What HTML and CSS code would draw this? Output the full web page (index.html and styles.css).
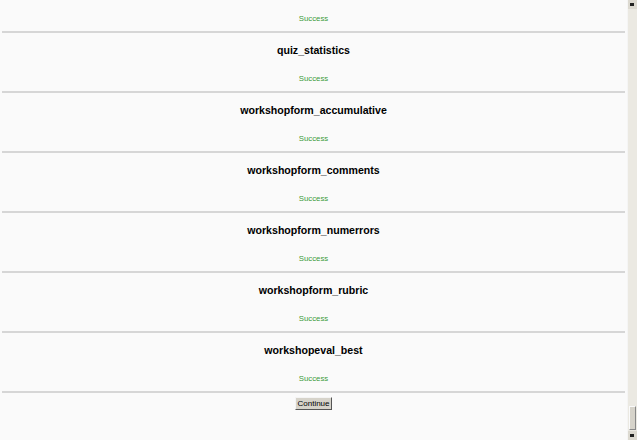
FILE: index.html
```html
<!DOCTYPE html>
<html lang="en">
<head>
    <meta charset="UTF-8">
    <title>Upgrade plugins</title>
    <link rel="stylesheet" href="styles.css">
</head>
<body>
    <div class="page">
        <div class="content">
            <div class="plugin first">
                <div class="notifysuccess">Success</div>
            </div>
            <hr>
            <div class="plugin">
                <h2>quiz_statistics</h2>
                <div class="notifysuccess">Success</div>
            </div>
            <hr>
            <div class="plugin">
                <h2>workshopform_accumulative</h2>
                <div class="notifysuccess">Success</div>
            </div>
            <hr>
            <div class="plugin">
                <h2>workshopform_comments</h2>
                <div class="notifysuccess">Success</div>
            </div>
            <hr>
            <div class="plugin">
                <h2>workshopform_numerrors</h2>
                <div class="notifysuccess">Success</div>
            </div>
            <hr>
            <div class="plugin">
                <h2>workshopform_rubric</h2>
                <div class="notifysuccess">Success</div>
            </div>
            <hr>
            <div class="plugin">
                <h2>workshopeval_best</h2>
                <div class="notifysuccess">Success</div>
            </div>
            <hr>
            <div class="buttons">
                <button type="button">Continue</button>
            </div>
        </div>
        <div class="scrollbar">
            <div class="arrow up"></div>
            <div class="track"></div>
            <div class="thumb"></div>
            <div class="arrow down"></div>
        </div>
    </div>
</body>
</html>
```
FILE: styles.css
```css
html, body { margin: 0; padding: 0; background: #fafafa; }
body { font-family: "Liberation Sans", Arial, sans-serif; }
.page { display: flex; height: 440px; overflow: hidden; }
.content { flex: 1; }
hr { margin: 0 2px; height: 0; border: 0; border-top: 2px solid #d6d6d6; }
.plugin { padding: 10px 0 6px; text-align: center; }
.plugin.first { padding-top: 13px; }
.plugin h2 { margin: 0 0 15px; font-size: 10.6px; line-height: 15px; font-weight: bold; color: #000; }
.notifysuccess { font-size: 7.8px; line-height: 12px; color: #3a9a3a; }
.buttons { display: flex; justify-content: center; padding-top: 4px; }
.buttons button { font-family: "Liberation Sans", Arial, sans-serif; font-size: 8px; line-height: 9px; padding: 1px 1px; color: #000; background: #d6d3ca; border: 1px solid; border-color: #f4f4f4 #555 #555 #f4f4f4; }
.scrollbar { width: 9px; display: flex; flex-direction: column; background: #ebe9e2; border-left: 1px solid #f5f5f5; }
.arrow { height: 9px; background: #dcd9d0; position: relative; }
.arrow::after { content: ""; position: absolute; left: 2px; width: 4px; height: 3px; background: #222; }
.arrow.up::after { top: 3px; }
.arrow.down::after { top: 3px; }
.track { flex: 1; }
.thumb { height: 22px; margin: 0 1px 1px 1px; background: #d6d3ca; border: 1px solid; border-color: #fafafa #888 #888 #fafafa; }
```
